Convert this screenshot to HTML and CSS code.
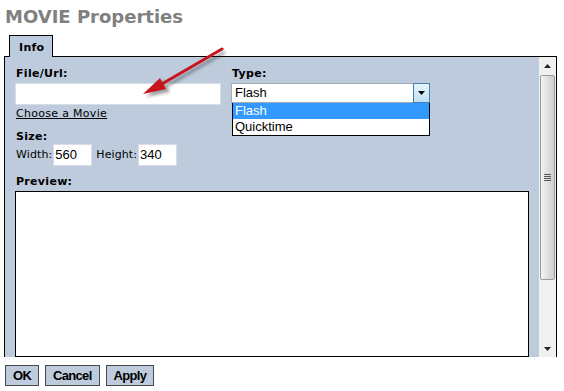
FILE: index.html
```html
<!DOCTYPE html>
<html>
<head>
<meta charset="utf-8">
<link rel="stylesheet" href="styles.css">
</head>
<body>
<h1 class="title">MOVIE Properties</h1>
<div class="tabs"><div class="tab">Info</div></div>
<div class="panel">
  <div class="content">
    <div class="cols">
      <div class="col-left">
        <div class="label">File/Url:</div>
        <div class="input url"></div>
        <a class="link">Choose a Movie</a>
        <div class="label size-label">Size:</div>
        <div class="size-row">
          <span class="small">Width:</span><div class="input num">560</div>
          <span class="small h">Height:</span><div class="input num">340</div>
        </div>
      </div>
      <div class="col-right">
        <div class="label">Type:</div>
        <div class="select">
          <span class="sel-val">Flash</span>
          <span class="sel-btn"><svg width="8" height="5" viewBox="0 0 8 5"><path d="M0 0H7L3.5 4Z" fill="#000"/></svg></span>
        </div>
        <div class="listbox">
          <div class="opt active">Flash</div>
          <div class="opt">Quicktime</div>
        </div>
      </div>
    </div>
    <div class="label preview-label">Preview:</div>
    <div class="preview"></div>
  </div>
  <div class="scrollbar">
    <div class="sb-btn"><svg width="7" height="4" viewBox="0 0 7 4"><path d="M0 4H7L3.5 0Z" fill="#222"/></svg></div>
    <div class="sb-track">
      <div class="sb-thumb"><div class="grip"></div></div>
    </div>
    <div class="sb-btn"><svg width="7" height="4" viewBox="0 0 7 4"><path d="M0 0H7L3.5 4Z" fill="#222"/></svg></div>
  </div>
</div>
<div class="buttons">
  <button class="btn">OK</button>
  <button class="btn">Cancel</button>
  <button class="btn">Apply</button>
</div>
<svg class="arrow" width="100" height="65" viewBox="0 0 100 65">
  <defs>
    <filter id="sh" x="-20%" y="-20%" width="140%" height="140%">
      <feGaussianBlur stdDeviation="1.5"/>
    </filter>
  </defs>
  <g transform="translate(3,3)" opacity="0.45" filter="url(#sh)">
    <line x1="89" y1="5" x2="22" y2="44" stroke="#333" stroke-width="3"/>
    <path d="M10 50 L28 33 L34 45 Z" fill="#333"/>
  </g>
  <line x1="89" y1="5" x2="22" y2="44" stroke="#c8141c" stroke-width="3" stroke-linecap="round"/>
  <path d="M10 50 L27 34 L33 45 Z" fill="#c8141c"/>
</svg>
</body>
</html>
```
FILE: styles.css
```css
html, body { margin: 0; padding: 0; background: #fff; }
body {
  width: 564px; height: 391px; overflow: hidden; position: relative;
  font-family: "DejaVu Sans", Verdana, sans-serif; font-size: 11px; color: #000;
}
.title {
  margin: 0; padding: 6px 0 0 5px; height: 26px; box-sizing: border-box;
  font-size: 18px; font-weight: bold; color: #808080; line-height: 22px;
}
.tabs { padding-left: 9px; height: 31px; display: flex; align-items: flex-end; margin-bottom: -1px; position: relative; z-index: 1; }
.tab {
  width: 44px; height: 22px; box-sizing: border-box;
  background: #bccbdd; border: 1px solid #000; border-bottom: none;
  font-weight: bold; padding: 5px 0 0 9px; line-height: 13px; letter-spacing: 0.3px;
}
.panel {
  margin-left: 4px; width: 553px; height: 301px; box-sizing: border-box;
  border: 1px solid #000; border-bottom: none; background: #bdcbdc;
  display: flex; overflow: hidden;
}
.content { flex: 1; padding: 10px 0 0 10px; display: flex; flex-direction: column; }
.cols { display: flex; }
.col-left { width: 216px; }
.col-right { display: flex; flex-direction: column; position: relative; }
.label { font-weight: bold; line-height: 14px; height: 14px; margin-left: 1px; letter-spacing: 0.3px; }
.input {
  background: #fff; border: 1px solid #d6dde6; box-sizing: border-box;
  font-family: "Liberation Sans", Arial, sans-serif; font-size: 13px; line-height: 19px;
}
.url { width: 206px; height: 22px; margin-top: 2px; }
.link { display: block; margin-top: 2px; margin-left: 1px; text-decoration: underline; color: #000; line-height: 14px; letter-spacing: 0.3px; }
.size-label { margin-top: 9px; }
.size-row { display: flex; align-items: center; margin-top: 0; }
.small { line-height: 14px; margin-left: 1px; margin-right: 1px; letter-spacing: 0.1px; }
.small.h { margin-left: 4px; }
.num { width: 39px; height: 22px; padding-left: 1px; }
.select {
  margin-top: 2px; width: 199px; height: 20px; box-sizing: border-box;
  border: 1px solid #a5acb5; background: #fff; display: flex;
  font-family: "Liberation Sans", Arial, sans-serif; font-size: 13px;
}
.sel-val { flex: 1; line-height: 18px; padding-left: 3px; }
.sel-btn {
  width: 17px; box-sizing: border-box; border: 1px solid #3c7fb1; margin: -1px -1px -1px 0;
  background: linear-gradient(#e8f4fb, #bfe0f2); display: flex; align-items: center; justify-content: center;
}
.listbox {
  position: absolute; left: 1px; top: 36px;
  width: 198px; box-sizing: border-box; border: 1px solid #000; border-top: none; background: #fff;
  font-family: "Liberation Sans", Arial, sans-serif; font-size: 13px;
}
.opt { height: 16px; line-height: 16px; padding-left: 2px; }
.opt.active { background: #3399ff; color: #fff; }
.preview-label { margin-top: 9px; }
.preview {
  margin-top: 2px; width: 514px; flex: 1; box-sizing: border-box;
  background: #fff; border: 1px solid #000;
}
.scrollbar {
  width: 17px; background: #f0f0f0; display: flex; flex-direction: column; flex-shrink: 0;
}
.sb-btn { height: 17px; display: flex; align-items: center; justify-content: center; }
.sb-track { flex: 1; padding: 1px 0; }
.sb-thumb {
  height: 205px; margin: 0 0 0 1px; width: 15px; box-sizing: border-box;
  border: 1px solid #9b9b9b; border-radius: 2px;
  background: linear-gradient(90deg, #f4f4f4, #dcdcdc 60%, #cfcfcf);
  display: flex; align-items: center; justify-content: center;
}
.grip { width: 7px; height: 7px; background: repeating-linear-gradient(#555 0 1px, transparent 1px 2px); }
.buttons { display: flex; gap: 6px; padding: 8px 0 0 5px; }
.btn {
  margin: 0; height: 21px; padding: 0 7px; background: #bdcbdc; border: 1px solid #4a4a4a;
  font-family: "Liberation Sans", Arial, sans-serif; font-weight: bold; font-size: 13px;
  letter-spacing: -0.7px; color: #000; line-height: 19px;
}
.arrow { position: absolute; left: 133px; top: 44px; }
```
